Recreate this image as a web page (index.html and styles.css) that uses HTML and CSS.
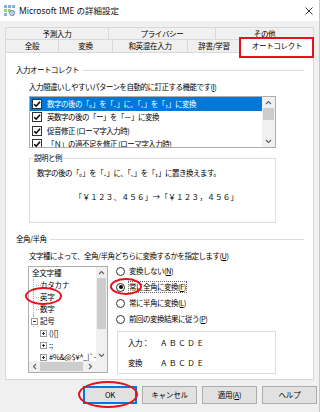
FILE: index.html
```html
<!DOCTYPE html>
<html lang="ja">
<head>
<meta charset="utf-8">
<link rel="stylesheet" href="styles.css">
</head>
<body>
<div class="window">
  <div class="titlebar">
    <svg class="appicon" width="11" height="11" viewBox="0 0 11 11">
      <rect x="0" y="0" width="3" height="3" fill="#7fb2e0"/>
      <rect x="4" y="0" width="3" height="3" fill="#7fb2e0"/>
      <rect x="8" y="0" width="3" height="3" fill="#7fb2e0"/>
      <rect x="0" y="4" width="3" height="3" fill="#9ccf7c"/>
      <rect x="4" y="4" width="3" height="3" fill="#9ccf7c"/>
      <rect x="0" y="8" width="3" height="3" fill="#7fb2e0"/>
      <circle cx="8" cy="8" r="2.3" fill="none" stroke="#6a8fb3" stroke-width="1.2"/>
      <circle cx="8" cy="8" r="0.8" fill="#6a8fb3"/>
    </svg>
    <span class="title">Microsoft IME の詳細設定</span>
    <svg class="close" width="8" height="8" viewBox="0 0 8 8"><path d="M0.5 0.5L7.5 7.5M7.5 0.5L0.5 7.5" stroke="#222" stroke-width="0.9"/></svg>
  </div>

  <div class="tabrow row1">
    <div class="tab t103">予測入力</div>
    <div class="tab t107">プライバシー</div>
    <div class="tab t99 last">その他</div>
  </div>
  <div class="tabrow row2">
    <div class="tab t53">全般</div>
    <div class="tab t54">変換</div>
    <div class="tab t75">和英混在入力</div>
    <div class="tab t53">辞書/学習</div>
    <div class="tab t74 last active">オートコレクト</div>
  </div>

  <div class="panel">
    <div class="group-head"><span>入力オートコレクト</span><span class="rule"></span></div>
    <div class="indent">
      <div class="desc">入力間違いしやすいパターンを自動的に訂正する機能です(<u>I</u>)</div>
      <div class="listbox">
        <div class="list-items">
          <div class="item selected"><span class="chk"><svg width="8" height="8" viewBox="0 0 8 8"><path d="M1.2 4.2L3.2 6.2L7 1.8" fill="none" stroke="#000" stroke-width="1.6"/></svg></span><span>数字の後の「。」を「．」に、「、」を「，」に変換</span></div>
          <div class="item"><span class="chk"><svg width="8" height="8" viewBox="0 0 8 8"><path d="M1.2 4.2L3.2 6.2L7 1.8" fill="none" stroke="#000" stroke-width="1.6"/></svg></span><span>英数字の後の「ー」を「－」に変換</span></div>
          <div class="item"><span class="chk"><svg width="8" height="8" viewBox="0 0 8 8"><path d="M1.2 4.2L3.2 6.2L7 1.8" fill="none" stroke="#000" stroke-width="1.6"/></svg></span><span>促音修正 (ローマ字入力時)</span></div>
          <div class="item"><span class="chk"><svg width="8" height="8" viewBox="0 0 8 8"><path d="M1.2 4.2L3.2 6.2L7 1.8" fill="none" stroke="#000" stroke-width="1.6"/></svg></span><span>「Ｎ」の過不足を修正 (ローマ字入力時)</span></div>
        </div>
        <div class="vscroll">
          <span class="arrow"><svg width="7" height="5" viewBox="0 0 7 5"><path d="M1 4L3.5 1.5L6 4" fill="none" stroke="#606060" stroke-width="1.1"/></svg></span>
          <span class="thumb t-list"></span>
          <span class="track"></span>
          <span class="arrow"><svg width="7" height="5" viewBox="0 0 7 5"><path d="M1 1L3.5 3.5L6 1" fill="none" stroke="#606060" stroke-width="1.1"/></svg></span>
        </div>
      </div>
      <div class="examplebox">
        <span class="boxlabel">説明と例</span>
        <div class="ex-text">数字の後の「。」を「．」に、「、」を「，」に置き換えます。</div>
        <div class="ex-sample">「￥１２３、４５６」→「￥１２３，４５６」</div>
      </div>
    </div>

    <div class="group-head g2"><span>全角/半角</span><span class="rule"></span></div>
    <div class="indent">
      <div class="desc">文字種によって、全角/半角どちらに変換するかを指定します(<u>U</u>)</div>
      <div class="width-row">
        <div class="tree">
          <div class="tree-items">
            <div class="node root">全文字種</div>
            <div class="node leaf"><span class="gut"><span class="tick"></span></span>カタカナ</div>
            <div class="node leaf"><span class="gut"><span class="tick"></span></span>英字</div>
            <div class="node leaf"><span class="gut"><span class="tick"></span></span>数字</div>
            <div class="node leaf"><span class="gut"><svg class="exp" width="7" height="7" viewBox="0 0 7 7"><rect x="0.5" y="0.5" width="6" height="6" fill="#fff" stroke="#9a9a9a"/><path d="M2 3.5H5" stroke="#333"/></svg></span>記号</div>
            <div class="node child"><span class="gut2"><svg class="exp" width="7" height="7" viewBox="0 0 7 7"><rect x="0.5" y="0.5" width="6" height="6" fill="#fff" stroke="#9a9a9a"/><path d="M2 3.5H5M3.5 2V5" stroke="#333"/></svg></span>()[]</div>
            <div class="node child"><span class="gut2"><svg class="exp" width="7" height="7" viewBox="0 0 7 7"><rect x="0.5" y="0.5" width="6" height="6" fill="#fff" stroke="#9a9a9a"/><path d="M2 3.5H5M3.5 2V5" stroke="#333"/></svg></span>:;</div>
            <div class="node child"><span class="gut2"><svg class="exp" width="7" height="7" viewBox="0 0 7 7"><rect x="0.5" y="0.5" width="6" height="6" fill="#fff" stroke="#9a9a9a"/><path d="M2 3.5H5M3.5 2V5" stroke="#333"/></svg></span>#%&amp;@$¥^_|`-</div>
          </div>
          <div class="vscroll small">
            <span class="arrow"><svg width="7" height="5" viewBox="0 0 7 5"><path d="M1 4L3.5 1.5L6 4" fill="none" stroke="#606060" stroke-width="1.1"/></svg></span>
            <span class="thumb t-tree"></span>
            <span class="track"></span>
            <span class="arrow"><svg width="7" height="5" viewBox="0 0 7 5"><path d="M1 1L3.5 3.5L6 1" fill="none" stroke="#606060" stroke-width="1.1"/></svg></span>
          </div>
          <div class="hscroll">
            <span class="harrow"><svg width="5" height="7" viewBox="0 0 5 7"><path d="M4 1L1.5 3.5L4 6" fill="none" stroke="#606060" stroke-width="1.1"/></svg></span>
            <span class="hthumb"></span>
            <span class="htrack"></span>
            <span class="harrow"><svg width="5" height="7" viewBox="0 0 5 7"><path d="M1 1L3.5 3.5L1 6" fill="none" stroke="#606060" stroke-width="1.1"/></svg></span>
          </div>
          <div class="corner"></div>
        </div>
        <div class="options">
          <div class="radio"><span class="dot"></span><span>変換しない(<u>N</u>)</span></div>
          <div class="radio"><span class="dot on"></span><span class="focus">常に全角に変換(<u>F</u>)</span></div>
          <div class="radio"><span class="dot"></span><span>常に半角に変換(<u>L</u>)</span></div>
          <div class="radio"><span class="dot"></span><span>前回の変換結果に従う(<u>P</u>)</span></div>
          <div class="samplebox">
            <div class="srow"><span class="slabel">入力：</span><span class="sval">ＡＢＣＤＥ</span></div>
            <div class="srow"><span class="slabel">変換</span><span class="sval">ＡＢＣＤＥ</span></div>
          </div>
        </div>
      </div>
    </div>
  </div>

  <div class="buttons">
    <div class="btn default">OK</div>
    <div class="btn">キャンセル</div>
    <div class="btn">適用(<u>A</u>)</div>
    <div class="btn">ヘルプ</div>
  </div>

  <div class="mark mark-tab"></div>
  <div class="mark mark-eiji"></div>
  <div class="mark mark-radio"></div>
  <div class="mark mark-ok"></div>
</div>
</body>
</html>
```

FILE: styles.css
```css
* { box-sizing: border-box; }
html, body { margin: 0; padding: 0; }
body {
  width: 320px;
  height: 412px;
  overflow: hidden;
  background: #f0f0f0;
  font-family: "Noto Sans CJK JP", sans-serif;
  font-size: 7.5px;
  letter-spacing: -0.5px;
  line-height: 10px;
  color: #000;
}
u { text-decoration: underline; text-underline-offset: 1px; }
.window {
  position: relative;
  width: 320px;
  height: 412px;
  background: #f0f0f0;
  border-right: 1px solid #c8c8c8;
}
.titlebar {
  height: 21px;
  background: #fff;
  display: flex;
  align-items: center;
}
.appicon { margin-left: 4px; flex: none; }
.title {
  margin-left: 4px;
  font-family: "Noto Sans", "Noto Sans CJK JP", sans-serif;
  font-size: 8.5px;
  letter-spacing: 0;
  color: #111;
  flex: 1;
}
.close { margin-right: 6px; flex: none; }

.tabrow {
  display: flex;
  margin-left: 5px;
  width: 309px;
}
.row1 { margin-top: 6px; height: 12px; }
.row2 { height: 13px; align-items: flex-end; }
.tab {
  height: 100%;
  border-left: 1px solid #d9d9d9;
  border-top: 1px solid #d9d9d9;
  background: #f0f0f0;
  display: flex;
  align-items: center;
  justify-content: center;
  color: #000;
  letter-spacing: -0.3px;
}
.tab.last { border-right: 1px solid #d9d9d9; }
.t103 { width: 103px; }
.t107 { width: 107px; }
.t99 { width: 99px; }
.t53 { width: 53px; }
.t54 { width: 54px; }
.t75 { width: 75px; }
.t74 { width: 74px; }
.tab.active {
  height: 15px;
  margin-bottom: -1px;
  background: #fff;
  position: relative;
  z-index: 1;
  padding-bottom: 1px;
}

.panel {
  margin-left: 5px;
  width: 309px;
  height: 328px;
  background: #fff;
  border: 1px solid #d9d9d9;
  padding: 12px 9px 0 10px;
}
.group-head {
  display: flex;
  align-items: center;
  height: 10px;
  gap: 4px;
  color: #000;
}
.group-head .rule {
  flex: 1;
  border-top: 1px solid #dcdcdc;
}
.group-head.g2 { margin-top: 11px; }
.indent { margin-left: 13px; }
.desc { margin-top: 7px; height: 10px; white-space: nowrap; }

.listbox {
  margin-top: 4px;
  width: 247px;
  height: 52px;
  border: 1px solid #adadad;
  display: flex;
}
.list-items { flex: 1; overflow: hidden; }
.item {
  height: 13.5px;
  display: flex;
  align-items: center;
  white-space: nowrap;
  padding-left: 2px;
  gap: 5px;
}
.item.selected { background: #0078d7; color: #fff; }
.chk {
  width: 10px;
  height: 10px;
  border: 1px solid #333;
  background: #fff;
  display: flex;
  align-items: center;
  justify-content: center;
  flex: none;
}
.vscroll {
  width: 13px;
  background: #f0f0f0;
  display: flex;
  flex-direction: column;
  align-items: stretch;
}
.vscroll .arrow {
  height: 11px;
  display: flex;
  align-items: center;
  justify-content: center;
  flex: none;
}
.vscroll .thumb { background: #cdcdcd; margin: 0 1px; flex: none; }
.vscroll .track { flex: 1; }
.t-list { height: 12px; }
.vscroll.small { width: 11px; }
.t-tree { height: 51px; }

.examplebox {
  margin-top: 10px;
  width: 247px;
  height: 65px;
  border: 1px solid #dcdcdc;
}
.boxlabel {
  display: block;
  width: fit-content;
  margin: -6px 0 0 3px;
  padding: 0 1px;
  background: #fff;
  line-height: 10px;
  height: 10px;
}
.ex-text { margin: 5px 0 0 7px; height: 10px; white-space: nowrap; }
.ex-sample {
  margin-top: 14px;
  height: 10px;
  text-align: center;
  padding-left: 8px;
  white-space: nowrap;
  letter-spacing: 0.3px;
}

.width-row { display: flex; margin-top: 5px; margin-left: -1px; }
.tree {
  width: 80px;
  height: 107px;
  border: 1px solid #adadad;
  display: grid;
  grid-template-columns: 1fr 11px;
  grid-template-rows: 1fr 11px;
  flex: none;
}
.tree-items { overflow: hidden; }
.node {
  height: 12px;
  display: flex;
  align-items: center;
  white-space: nowrap;
  letter-spacing: -0.2px;
}
.node.root { padding-left: 3px; }
.gut {
  width: 11px;
  height: 12px;
  flex: none;
  display: flex;
  align-items: center;
  padding-left: 2px;
  border-left: 1px dotted #a8a8a8;
  margin-left: 4px;
  margin-right: -4px;
}
.gut .tick {
  display: block;
  width: 5px;
  border-top: 1px dotted #a8a8a8;
}
.gut .exp { margin-left: -5px; }
.gut2 {
  width: 9px;
  margin-left: 11px;
  flex: none;
  display: flex;
  align-items: center;
}
.hscroll {
  background: #f0f0f0;
  display: flex;
  align-items: stretch;
}
.harrow {
  width: 11px;
  display: flex;
  align-items: center;
  justify-content: center;
  flex: none;
}
.hthumb { width: 43px; background: #cdcdcd; margin: 1px 0; flex: none; }
.htrack { flex: 1; }
.corner { background: #f0f0f0; }

.options {
  margin-left: 8px;
  display: flex;
  flex-direction: column;
  gap: 6px;
}
.radio {
  height: 10px;
  display: flex;
  align-items: center;
  gap: 4px;
  white-space: nowrap;
}
.dot {
  width: 9px;
  height: 9px;
  border: 1px solid #333;
  border-radius: 50%;
  background: #fff;
  display: flex;
  align-items: center;
  justify-content: center;
  flex: none;
}
.dot.on::after {
  content: "";
  width: 4px;
  height: 4px;
  border-radius: 50%;
  background: #000;
}
.focus { outline: 1px dotted #666; outline-offset: 0; }
.samplebox {
  margin-top: 1px;
  margin-left: 1px;
  width: 159px;
  height: 43px;
  border: 1px solid #dcdcdc;
  padding: 6px 0 0 10px;
  display: flex;
  flex-direction: column;
  gap: 10px;
}
.srow { display: flex; height: 10px; white-space: nowrap; }
.slabel { width: 32px; flex: none; }
.sval { letter-spacing: 1.6px; }

.buttons {
  display: flex;
  margin-top: 6px;
  padding-left: 83px;
  gap: 5px;
}
.btn {
  width: 55px;
  height: 18px;
  background: #e1e1e1;
  border: 1px solid #adadad;
  display: flex;
  align-items: center;
  justify-content: center;
  letter-spacing: -0.2px;
}
.btn.default { border: 2px solid #0078d7; width: 54px; }

.mark {
  position: absolute;
  border: 2px solid #e8101a;
  pointer-events: none;
  z-index: 5;
}
.mark-tab { left: 239px; top: 37px; width: 75px; height: 21px; }
.mark-eiji { left: 25px; top: 287px; width: 37px; height: 18px; border-radius: 50%; }
.mark-radio { left: 110px; top: 278px; width: 32px; height: 17px; border-radius: 50%; }
.mark-ok { left: 78px; top: 381px; width: 60px; height: 27px; border-radius: 50%; }
```
